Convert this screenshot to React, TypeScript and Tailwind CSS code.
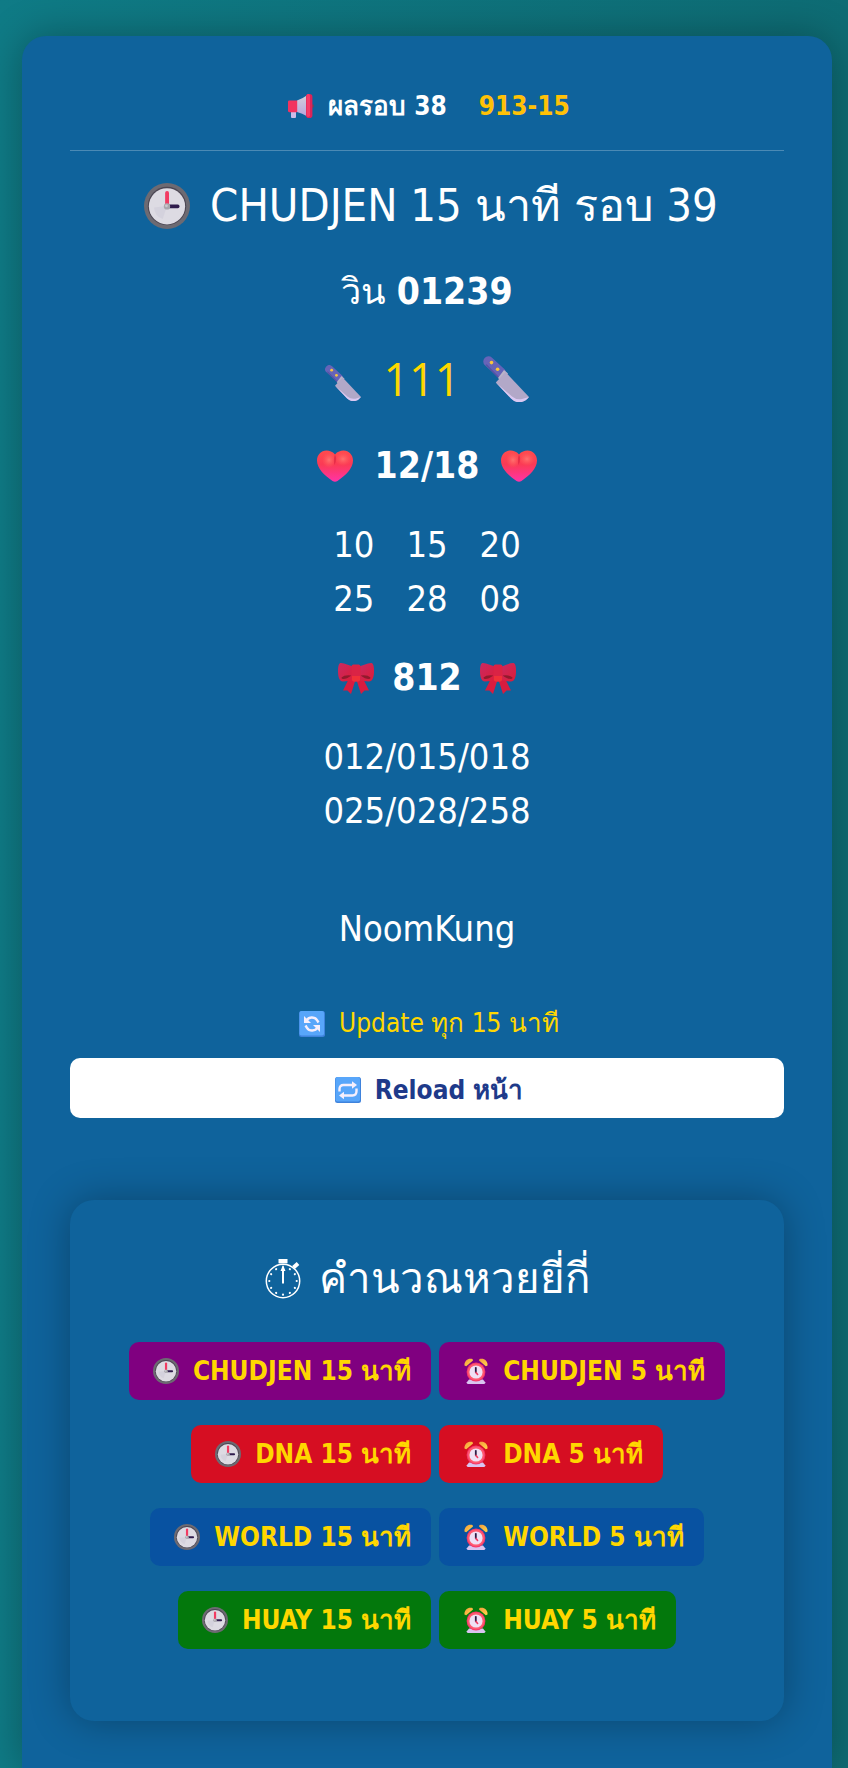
import type { ReactNode } from 'react';

type IconProps = { className?: string };

function ClockIcon({ className = 'size-[26px]' }: IconProps) {
  return (
    <svg viewBox="0 0 32 32" className={className} aria-hidden="true">
      <circle cx="16" cy="16" r="16" fill="#6d6a72" />
      <circle cx="16" cy="16" r="13.4" fill="#4c4754" />
      <circle cx="16" cy="16.2" r="12.6" fill="#dddbe3" />
      <path d="M16 16 L7 17 A9 9 0 0 0 13 25Z" fill="#cfccd8" opacity=".6" />
      <rect x="14.7" y="5.6" width="2.7" height="10.5" rx="1.3" fill="#f23b62" />
      <rect x="16.5" y="15" width="8.2" height="2.6" rx="1.2" fill="#2f1c4d" />
      <circle cx="16" cy="16.3" r="2.2" fill="#a9a8ad" />
      <circle cx="15.6" cy="15.9" r="1" fill="#c9c8ce" />
    </svg>
  );
}

function AlarmIcon() {
  return (
    <svg viewBox="0 0 26 26" className="size-[26px]" aria-hidden="true">
      <defs>
        <linearGradient id="bell" x1="0" y1="0" x2="1" y2="1">
          <stop offset="0" stopColor="#f59a3c" />
          <stop offset="1" stopColor="#ffd84a" />
        </linearGradient>
      </defs>
      <path d="M1.5 7.5C1 3 5 -.5 9.5 1L10 2.5 3.2 8.2Z" fill="url(#bell)" />
      <path d="M24.5 7.5C25 3 21 -.5 16.5 1L16 2.5 22.8 8.2Z" fill="url(#bell)" />
      <path d="M6 21.5L3.8 24.2Q3.5 26 5 26H21Q22.5 26 22.2 24.2L20 21.5Z" fill="#d9c4f0" />
      <circle cx="13" cy="14" r="9.4" fill="#f5376b" />
      <circle cx="13" cy="14" r="8.4" fill="#ff5a70" />
      <circle cx="13" cy="14" r="6.6" fill="#efe0f5" />
      <path d="M12.8 9.8V14.3" stroke="#2d1d48" strokeWidth="1.8" strokeLinecap="round" />
      <path d="M13 14.4L14.6 16.4" stroke="#f23b62" strokeWidth="1.6" strokeLinecap="round" />
    </svg>
  );
}

function MegaphoneIcon() {
  return (
    <svg viewBox="0 0 26 26" className="size-[26px]" aria-hidden="true">
      <defs>
        <linearGradient id="horn" x1="0" y1="0" x2="0" y2="1">
          <stop offset="0" stopColor="#d2d0da" />
          <stop offset="1" stopColor="#b9a3dd" />
        </linearGradient>
      </defs>
      <rect x="3" y="17" width="5" height="8" rx="1" fill="#cdbbe8" />
      <circle cx="24.3" cy="13" r="1.8" fill="#5b4a63" />
      <path d="M9 7.500Q14 6 19.500 2V23.500Q14 20 9 19Z" fill="url(#horn)" />
      <path d="M1.200 7.500H9.200V19.200H1.200Q0 19 0 18V8.500Q0 7.500 1.200 7.500Z" fill="#f2335f" />
      <rect x="18" y="1" width="6.400" height="24" rx="2.800" fill="#dc2459" />
      <rect x="18.500" y="1" width="3.500" height="23" rx="1.700" fill="#f63c68" />
    </svg>
  );
}

function KnifeIcon({ className }: IconProps) {
  return (
    <svg viewBox="0 0 46 46" className={className} aria-hidden="true">
      <path d="M5.500 5.500L18 17" stroke="#6664b8" strokeWidth="10.500" strokeLinecap="round" />
      <path d="M3.500 9L15 21" stroke="#5553a4" strokeWidth="1.500" strokeLinecap="round" />
      <path d="M15 22L21 14 25 17.500 18 25Z" fill="#b9b4c8" />
      <path d="M22.500 16L46 41Q42 46.500 35.500 46.200 31.500 46 28 42.500L12.800 26.500Z" fill="#b2a8c8" />
      <path d="M12.800 26.500L29 40.500Q33 44 39 43L46 41Q42 46.500 35.500 46.200 31.500 46 28 42.500Z" fill="#dac8f2" />
      <circle cx="8.500" cy="6.600" r="1.800" fill="#f8c63c" />
      <circle cx="14.600" cy="13.200" r="1.800" fill="#f8c63c" />
    </svg>
  );
}

function HeartIcon() {
  return (
    <svg viewBox="0 0 36 36" className="size-9" aria-hidden="true">
      <defs>
        <linearGradient id="heart" x1="0" y1="0" x2="0" y2="1">
          <stop offset="0" stopColor="#ff4b4d" />
          <stop offset=".45" stopColor="#fb3a56" />
          <stop offset="1" stopColor="#ff33a8" />
        </linearGradient>
        <radialGradient id="heart-light">
          <stop offset="0" stopColor="#ff716f" />
          <stop offset="1" stopColor="#ff5a5a" stopOpacity="0" />
        </radialGradient>
      </defs>
      <path
        d="M18 6.500C15.500 3.500 12.500 2.500 9.500 2.500 4 2.500 0 7 0 12.500 0 20.500 7.500 27.500 15.500 33Q18 34.500 20.500 33C28.500 27.500 36 20.500 36 12.500 36 7 32 2.500 26.500 2.500 23.500 2.500 20.500 3.500 18 6.500Z"
        fill="url(#heart)"
      />
      <ellipse cx="12" cy="12" rx="7" ry="8" fill="url(#heart-light)" />
      <ellipse cx="26" cy="11" rx="8" ry="7" fill="url(#heart-light)" />
      <path d="M18 6.500Q20.500 11 17.500 17 16 11 18 6.500Z" fill="#d9203f" opacity=".6" />
    </svg>
  );
}

function BowIcon() {
  return (
    <svg viewBox="0 0 36 36" className="size-9" aria-hidden="true">
      <defs>
        <linearGradient id="bow" x1="0" y1="0" x2="1" y2="1">
          <stop offset="0" stopColor="#c92a62" />
          <stop offset="1" stopColor="#dc1c38" />
        </linearGradient>
      </defs>
      <path d="M10.500 19.500L5 30.500 9.500 30.500 13 34 17.500 20Z" fill="#d81c3f" />
      <path d="M25.500 19.500L31 30.500 26.500 30.500 23 34 18.500 20Z" fill="#d81c3f" />
      <path d="M15 6.500C11 5.500 7 3 3 3 1 3 0 5.500 0 11 0 17 1.500 21.500 5 21.500 9 21.500 12 20.500 15.500 20Z" fill="url(#bow)" />
      <path d="M21 6.500C25 5.500 29 3 33 3 35 3 36 5.500 36 11 36 17 34.500 21.500 31 21.500 27 21.500 24 20.500 20.500 20Z" fill="url(#bow)" />
      <path d="M3.500 17.500Q6.500 14.500 13.500 15.500 8.500 19 5.500 19 3.300 19 3.500 17.500Z" fill="#911a2c" />
      <path d="M32.500 17.500Q29.500 14.500 22.500 15.500 27.500 19 30.500 19 32.700 19 32.500 17.500Z" fill="#911a2c" />
      <rect x="13.500" y="4.600" width="9" height="16.800" rx="2" fill="#da2345" />
      <path d="M14 16H22V19.500Q22 21.400 20 21.400H16Q14 21.400 14 19.500Z" fill="#f03038" />
    </svg>
  );
}

function Tile({ children }: { children: ReactNode }) {
  return (
    <svg viewBox="0 0 26 26" className="size-[26px]" fill="none" stroke="#f6effc" strokeWidth="2.400" aria-hidden="true">
      <rect width="26" height="26" rx="2.500" fill="#3f83dc" stroke="none" />
      <rect x=".5" width="24.500" height="24.500" rx="2" fill="#58a6fa" stroke="none" />
      {children}
    </svg>
  );
}

function RefreshIcon() {
  return (
    <Tile>
      <path d="M7.500 9.500C9.500 5.800 15.500 5.200 18 9.200L19.500 11.500" />
      <path d="M18.500 16.500C16.500 20.200 10.500 20.800 8 16.800L6.500 14.500" />
      <path d="M5 5V12H12Z" fill="#f6effc" stroke="none" />
      <path d="M21 21V14H14Z" fill="#f6effc" stroke="none" />
    </Tile>
  );
}

function RepeatIcon() {
  return (
    <Tile>
      <path d="M4.500 14.500V12Q4.500 8 8.500 8H18" />
      <path d="M21.500 11.500V14Q21.500 18.500 17.500 18.500H8" />
      <path d="M17 4.300V11.700L22 8Z" fill="#f6effc" stroke="none" />
      <path d="M9 14.800V22.200L4 18.500Z" fill="#f6effc" stroke="none" />
    </Tile>
  );
}

const ticks = [0, 30, 60, 90, 120, 150, 180, 210, 240, 270, 300, 330];

function StopwatchIcon() {
  return (
    <svg viewBox="0 0 36 40" className="h-10 w-9" fill="none" stroke="white" aria-hidden="true">
      <circle cx="18" cy="22" r="16.700" strokeWidth="1.500" />
      <rect x="13.500" y="0" width="9" height="4.300" fill="white" stroke="none" />
      <path d="M28.500 8.500L33 4.500" strokeWidth="4" />
      <path d="M18 24.500V9" strokeWidth="2" />
      <path d="M18 6L15.500 12H20.500Z" fill="white" stroke="none" />
      {ticks.map((a) => (
        <circle key={a} cx="18" cy="8.300" r="1.100" fill="white" stroke="none" transform={`rotate(${a} 18 22)`} />
      ))}
    </svg>
  );
}

const games = [
  { name: 'CHUDJEN', color: 'bg-[#800080]' },
  { name: 'DNA', color: 'bg-[#d60e22]' },
  { name: 'WORLD', color: 'bg-[#0852a1]' },
  { name: 'HUAY', color: 'bg-[#03780c]' },
];

const pairs = ['10', '15', '20', '25', '28', '08'];

function GameLink({ name, minutes, color }: { name: string; minutes: number; color: string }) {
  return (
    <a
      href={`#${name.toLowerCase()}-${minutes}`}
      className={`flex h-[58px] items-center gap-[14px] rounded-[10px] pr-5 pl-6 text-[26px] font-bold whitespace-nowrap text-[#ffd700] ${color}`}
    >
      {minutes === 15 ? <ClockIcon /> : <AlarmIcon />}
      <span>{name} {minutes} นาที</span>
    </a>
  );
}

export default function App() {
  return (
    <div className='min-h-screen bg-linear-to-r from-[#0f7b86] to-[#0e6c74] pt-9 pr-4 pl-[22px] font-["DejaVu_Sans_Condensed","Noto_Sans",sans-serif] text-white'>
      <main className="rounded-t-3xl bg-[#0f639c] px-12 pt-12 pb-[47px] shadow-[0_0_40px_rgba(0,0,0,0.3)]">
        <div className="flex items-center justify-center border-b border-white/25 pb-[22px] pl-1 text-[26px] leading-[44px] font-bold">
          <MegaphoneIcon />
          <span className="ml-[14px]">ผลรอบ 38</span>
          <span className="ml-8 text-[#ffc107]">913-15</span>
        </div>

        <h1 className="mt-7 flex items-center justify-center gap-5 pl-2 text-[45px] leading-[54px]">
          <ClockIcon className="size-[46px]" />
          CHUDJEN 15 นาที รอบ 39
        </h1>

        <section className="text-center text-[36px] leading-[54px]">
          <p className="mt-8">
            วิน <strong className="text-[37px]">01239</strong>
          </p>
          <p className='mt-8 flex items-center justify-center gap-[22px] font-["Open_Sans",sans-serif] text-[45px] leading-[56px] font-medium text-[#ffd700]'>
            <KnifeIcon className="mt-2 size-9" />
            111
            <KnifeIcon className="size-[46px]" />
          </p>
          <p className="mt-8 flex items-center justify-center gap-[22px] text-[37px] font-bold">
            <HeartIcon />
            12/18
            <HeartIcon />
          </p>
          <div className="mt-[25px] grid grid-cols-[auto_auto_auto] justify-center gap-x-8">
            {pairs.map((n) => (
              <span key={n}>{n}</span>
            ))}
          </div>
          <p className="mt-[25px] flex items-center justify-center gap-[18px] text-[37px] font-bold">
            <BowIcon />
            812
            <BowIcon />
          </p>
          <p className="mt-[25px]">
            012/015/018
            <br />
            025/028/258
          </p>
          <p className="mt-16">NoomKung</p>
        </section>

        <p className="mt-12 flex items-center justify-center gap-[14px] pl-1 text-[26px] leading-[39px] text-[#ffd700]">
          <RefreshIcon />
          Update ทุก 15 นาที
        </p>
        <button
          type="button"
          onClick={() => window.location.reload()}
          className="mt-[15px] flex h-[60px] w-full items-center justify-center gap-[14px] rounded-[10px] bg-white pt-1 pl-1 text-[26px] font-bold text-[#1e3a8a]"
        >
          <RepeatIcon />
          Reload หน้า
        </button>

        <section className="mt-[82px] rounded-3xl bg-[#0f639c] pt-12 pb-[72px] shadow-[0_0_40px_rgba(0,0,0,0.3)]">
          <h2 className="flex items-center justify-center gap-[18px] text-[42px] leading-[62px]">
            <StopwatchIcon />
            คำนวณหวยยี่กี่
          </h2>
          <nav className="mt-8 flex flex-col gap-[25px]">
            {games.map((g) => (
              <div key={g.name} className="flex justify-center gap-2">
                <GameLink name={g.name} minutes={15} color={g.color} />
                <GameLink name={g.name} minutes={5} color={g.color} />
              </div>
            ))}
          </nav>
        </section>
      </main>
    </div>
  );
}
